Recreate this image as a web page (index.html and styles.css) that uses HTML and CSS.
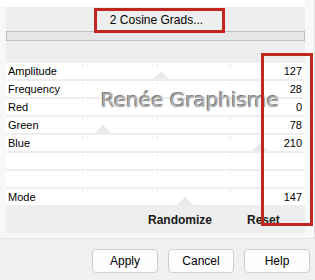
FILE: index.html
```html
<!DOCTYPE html>
<html>
<head>
    <title>Cosine Grads</title>
    <meta charset="UTF-8">
    <link rel="stylesheet" href="styles.css">
</head>
<body>
    <div class="frame">
        <div class="top-strip"></div>
        <div class="panel">
            <div class="preset-row">
                <span class="preset-name">2 Cosine Grads...</span>
            </div>
            <div class="track-bar"></div>

            <div class="rows">
                <div class="row"><span class="label">Amplitude</span><span class="value">127</span><span class="thumb" style="left: 155px"></span></div>
                <div class="row"><span class="label">Frequency</span><span class="value">28</span></div>
                <div class="row"><span class="label">Red</span><span class="value">0</span></div>
                <div class="row"><span class="label">Green</span><span class="value">78</span><span class="thumb" style="left: 97px"></span></div>
                <div class="row"><span class="label">Blue</span><span class="value">210</span><span class="thumb" style="left: 254px"></span></div>
                <div class="row empty"></div>
                <div class="row empty"></div>
                <div class="row"><span class="label">Mode</span><span class="value">147</span><span class="thumb" style="left: 179px"></span></div>
            </div>

            <div class="panel-footer">
                <span class="link-button randomize">Randomize</span>
                <span class="link-button">Reset</span>
            </div>
        </div>
    </div>

    <div class="dialog-buttons">
        <button class="dialog-button">Apply</button>
        <button class="dialog-button">Cancel</button>
        <button class="dialog-button">Help</button>
    </div>

    <!-- watermark and red highlight boxes drawn over the dialog -->
    <div class="watermark">Renée Graphisme</div>
    <div class="mark mark-preset"></div>
    <div class="mark mark-values"></div>
</body>
</html>
```

FILE: styles.css
```css
body {
    margin: 0;
    width: 315px;
    height: 280px;
    overflow: hidden;
    background: #f0f0f0;
    font-family: "Liberation Sans", Arial, sans-serif;
    font-size: 11px;
    color: #000;
    position: relative;
}
.frame {
    background: #f8f8f8;
    padding: 0 9px 5px 6px;
    border-bottom: 1px solid #e3e3e3;
    border-right: 1px solid #e3e3e3;
    width: 299px;
}
.top-strip {
    height: 7px;
    margin-left: -6px;
    background: #fff;
}
.panel {
    background: #eeeeee;
    height: 226px;
    display: flex;
    flex-direction: column;
}
.preset-row {
    height: 24px;
    display: flex;
    align-items: center;
    justify-content: center;
}
.preset-name {
    font-size: 12px;
    padding-top: 2px;
    padding-left: 2px;
}
.track-bar {
    height: 8px;
    background: #e6e6e6;
    border: 1px solid #bfbfbf;
}
.rows {
    margin-top: 22px;
    display: flex;
    flex-direction: column;
    gap: 2px;
}
.row {
    position: relative;
    height: 16px;
    background: #fff;
    display: flex;
    align-items: center;
    justify-content: space-between;
    padding: 0 3px 0 2px;
    overflow: hidden;
    background-image:
        linear-gradient(#e2e2e2, #e2e2e2),
        linear-gradient(#e2e2e2, #e2e2e2),
        linear-gradient(#e2e2e2, #e2e2e2);
    background-size: 1px 2px;
    background-repeat: no-repeat;
    background-position: 76px 1px, 151px 1px, 224px 1px;
}
.label, .value {
    position: relative;
    z-index: 1;
}
.thumb {
    position: absolute;
    bottom: 0;
    width: 0;
    height: 0;
    margin-left: -8px;
    border-left: 8px solid transparent;
    border-right: 8px solid transparent;
    border-bottom: 8px solid #e9e9e9;
}
.panel-footer {
    flex: 1;
    display: flex;
    align-items: center;
    padding-left: 142px;
    padding-top: 2px;
}
.link-button {
    font-weight: bold;
    font-size: 12px;
    color: #1a1a1a;
}
.randomize {
    margin-right: 35px;
}
.dialog-buttons {
    display: flex;
    justify-content: flex-end;
    gap: 10px;
    padding: 10px 5px 0 0;
}
.dialog-button {
    width: 66px;
    height: 24px;
    background: #fdfdfd;
    border: 1px solid #cfcfcf;
    border-radius: 4px;
    font-family: "Liberation Sans", Arial, sans-serif;
    font-size: 12px;
    color: #000;
    padding: 0;
}
.watermark {
    position: absolute;
    left: 101px;
    top: 88px;
    font-family: "DejaVu Sans", Verdana, sans-serif;
    font-size: 20px;
    color: #a8a8a8;
    text-shadow: 1px 1px 0 #fff, -1px -1px 0 #7a7a7a, 1px -1px 0 #ddd, -1px 1px 0 #ddd;
}
.mark {
    position: absolute;
    border: 3px solid #c1271c;
}
.mark-preset {
    left: 94px;
    top: 8px;
    width: 125px;
    height: 19px;
}
.mark-values {
    left: 261px;
    top: 53px;
    width: 46px;
    height: 167px;
}
```
